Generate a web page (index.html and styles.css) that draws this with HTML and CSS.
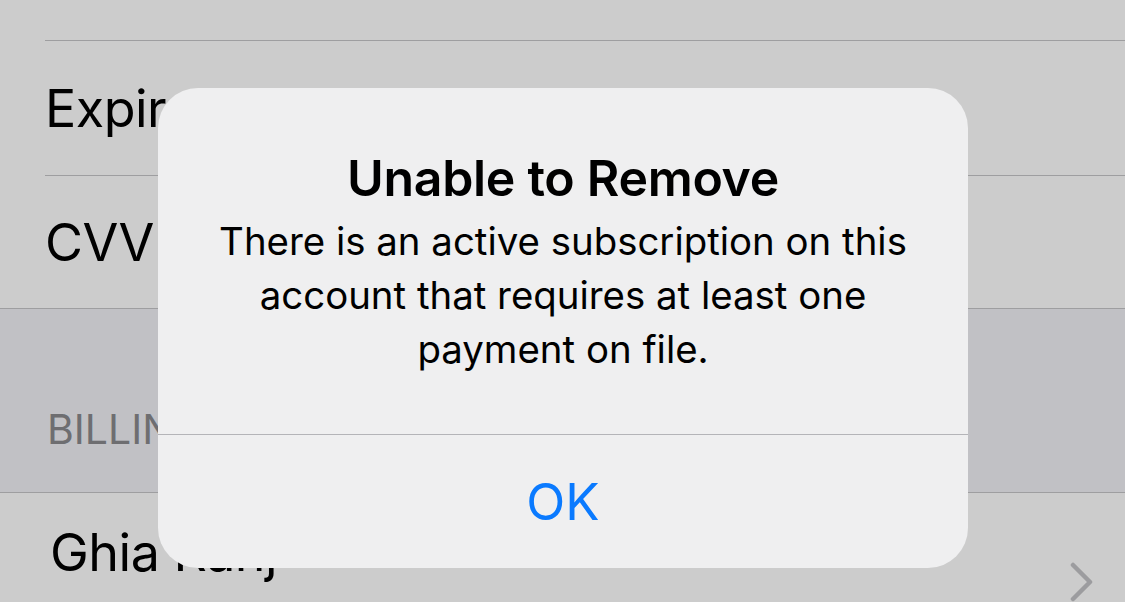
FILE: index.html
```html
<!DOCTYPE html>
<html lang="en">
<head>
  <meta charset="UTF-8" />
  <meta name="viewport" content="width=device-width, initial-scale=1.0" />
  <title>Payment Method</title>
  <link rel="stylesheet" href="styles.css">
</head>
<body>
  <div class="screen">
    <div class="list">
      <div class="row row-top"></div>
      <div class="row"><span class="label">Expiration Date</span></div>
      <div class="row row-last"><span class="label">CVV</span></div>
      <div class="section-header">BILLING ADDRESS</div>
      <div class="row row-nav">
        <span class="label">Ghia Ranj</span>
        <svg class="chevron" width="26" height="40" viewBox="0 0 26 40">
          <path d="M4 3 L21 20 L4 37" fill="none" stroke="#c4c4c7" stroke-width="4.5" stroke-linecap="round" stroke-linejoin="round"/>
        </svg>
      </div>
    </div>

    <div class="dim"></div>

    <div class="alert">
      <div class="alert-body">
        <div class="alert-title">Unable to Remove</div>
        <div class="alert-message">There is an active subscription on this account that requires at least one payment on file.</div>
      </div>
      <div class="alert-button">OK</div>
    </div>
  </div>
</body>
</html>
```

FILE: styles.css
```css
body {
  margin: 0;
  font-family: 'Inter', 'Noto Sans', sans-serif;
  background: #ffffff;
  overflow: hidden;
}

.screen {
  position: relative;
  width: 1125px;
  height: 602px;
  overflow: hidden;
  background: #ffffff;
}

.list {
  display: flex;
  flex-direction: column;
}

.row {
  display: flex;
  align-items: center;
  height: 134px;
  margin-left: 45px;
  border-bottom: 1px solid #c6c6c8;
  color: #000;
}

.row-top {
  height: 40px;
}

.row-last {
  height: 132px;
  margin-left: 0;
  padding-left: 45px;
}

.label {
  font-size: 52px;
  letter-spacing: -0.5px;
}

.section-header {
  height: 184px;
  box-sizing: border-box;
  background: #f2f2f7;
  border-bottom: 1px solid #c6c6c8;
  color: #8a8a8e;
  font-size: 41px;
  padding-left: 47px;
  display: flex;
  align-items: flex-end;
  padding-bottom: 38px;
}

.row-nav {
  height: 178px;
  box-sizing: border-box;
  border-bottom: none;
  margin-left: 0;
  padding-left: 50px;
  padding-right: 30px;
  justify-content: space-between;
  align-items: flex-start;
}

.row-nav .label {
  padding-top: 28px;
}

.chevron {
  align-self: center;
}

.dim {
  position: absolute;
  inset: 0;
  background: rgba(0, 0, 0, 0.2);
}

.alert {
  position: absolute;
  left: 158px;
  top: 88px;
  width: 810px;
  height: 480px;
  border-radius: 40px;
  background: #efeff0;
  display: flex;
  flex-direction: column;
  overflow: hidden;
}

.alert-body {
  height: 347px;
  border-bottom: 1px solid #b4b4b8;
  text-align: center;
  padding: 60px 55px 0;
  box-sizing: border-box;
}

.alert-title {
  font-size: 50px;
  font-weight: 600;
  line-height: 60px;
  color: #000;
  letter-spacing: -0.3px;
}

.alert-message {
  font-size: 38.4px;
  line-height: 54px;
  color: #000;
  margin-top: 6px;
}

.alert-button {
  flex: 1;
  display: flex;
  align-items: center;
  justify-content: center;
  font-size: 51px;
  color: #0a7aff;
}
```
